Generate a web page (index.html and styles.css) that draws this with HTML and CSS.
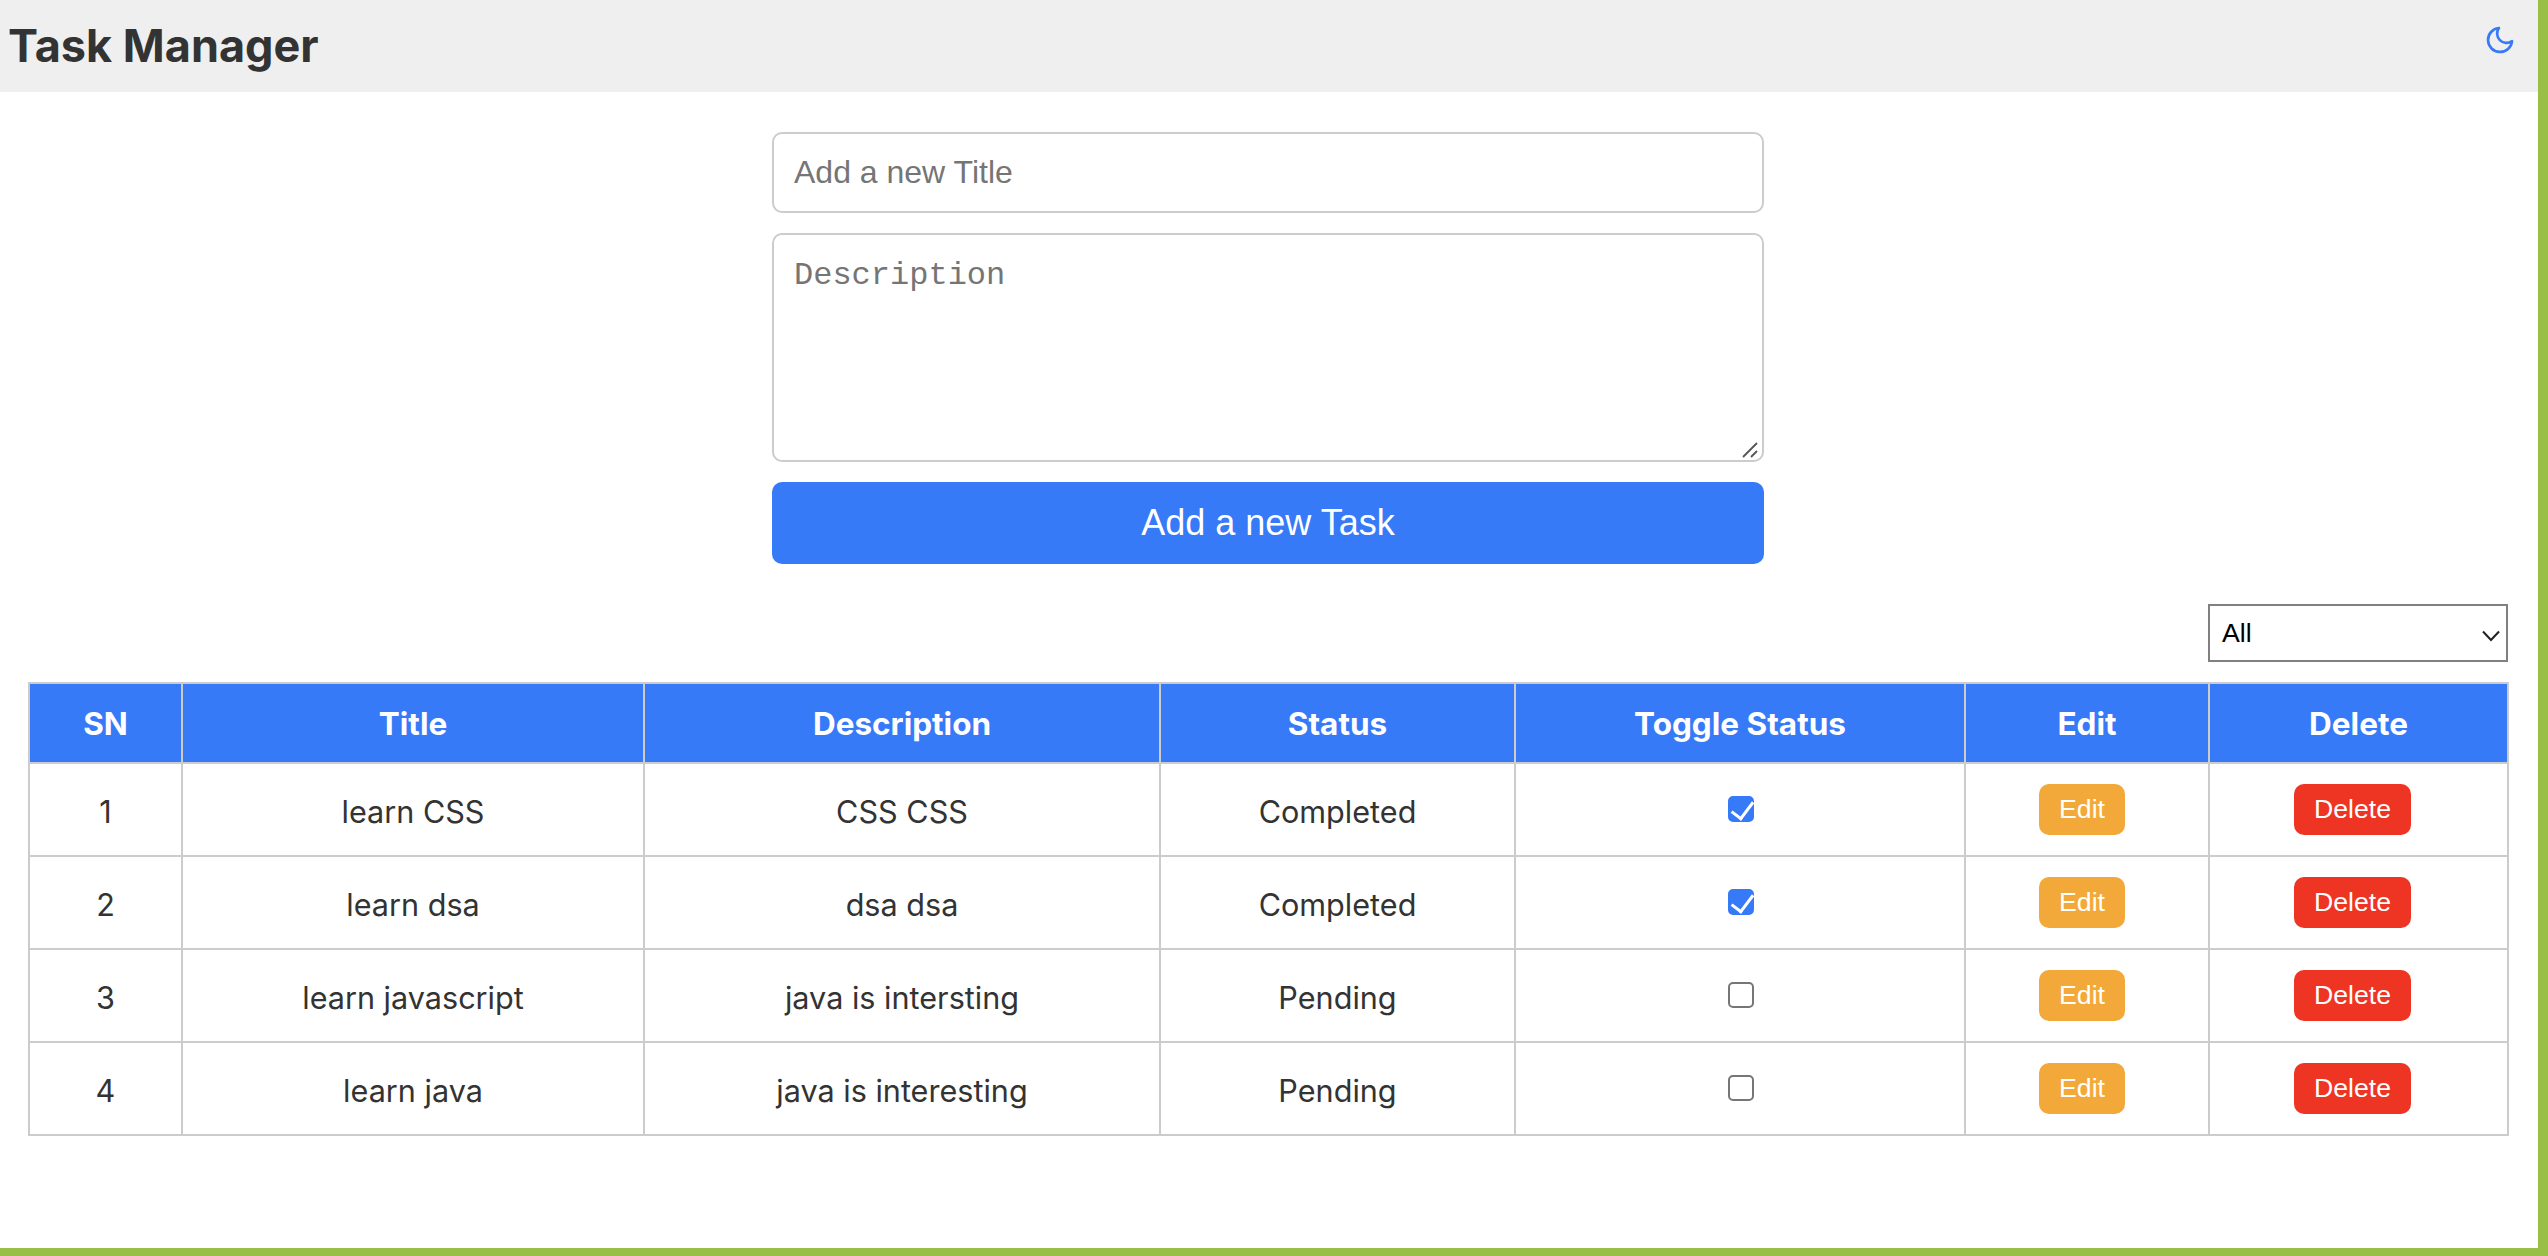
FILE: index.html
```html
<!DOCTYPE html>
<html lang="en">
<head>
<meta charset="utf-8">
<title>Task Manager</title>
<link rel="stylesheet" href="styles.css">
</head>
<body>
<div class="screen">
  <div class="app">
    <header class="topbar">
      <h1 class="brand">Task Manager</h1>
      <svg class="moon" width="32" height="32" viewBox="0 0 24 24" fill="none" stroke="#377af7" stroke-width="2" stroke-linecap="round" stroke-linejoin="round"><path d="M21 12.79A9 9 0 1 1 11.21 3 7 7 0 0 0 21 12.79z"/></svg>
    </header>
    <form class="task-form">
      <input class="field" type="text" placeholder="Add a new Title">
      <div class="area-wrap">
        <textarea class="field area" placeholder="Description"></textarea>
        <svg class="grip" width="20" height="20" viewBox="0 0 20 20" fill="none" stroke="#555" stroke-width="1.8"><path d="M2 18 16 4M10 18l6-6"/></svg>
      </div>
      <button class="submit" type="button">Add a new Task</button>
    </form>
    <div class="filter-row">
      <div class="filter-wrap">
        <select class="filter"><option>All</option></select>
        <svg class="chev" width="18" height="12" viewBox="0 0 18 12" fill="none" stroke="#222" stroke-width="2"><path d="M1 1.500 9 10l8-8.500"/></svg>
      </div>
    </div>
    <div class="table-wrap">
      <table class="tasks">
        <colgroup>
          <col class="c1"><col class="c2"><col class="c3"><col class="c4"><col class="c5"><col class="c6"><col class="c7">
        </colgroup>
        <thead>
          <tr><th>SN</th><th>Title</th><th>Description</th><th>Status</th><th>Toggle Status</th><th>Edit</th><th>Delete</th></tr>
        </thead>
        <tbody>
          <tr><td class="txt">1</td><td class="txt">learn CSS</td><td class="txt">CSS CSS</td><td class="txt">Completed</td><td><input class="check" type="checkbox" checked></td><td><button class="btn edit" type="button">Edit</button></td><td><button class="btn del" type="button">Delete</button></td></tr>
          <tr><td class="txt">2</td><td class="txt">learn dsa</td><td class="txt">dsa dsa</td><td class="txt">Completed</td><td><input class="check" type="checkbox" checked></td><td><button class="btn edit" type="button">Edit</button></td><td><button class="btn del" type="button">Delete</button></td></tr>
          <tr><td class="txt">3</td><td class="txt">learn javascript</td><td class="txt">java is intersting</td><td class="txt">Pending</td><td><input class="check" type="checkbox"></td><td><button class="btn edit" type="button">Edit</button></td><td><button class="btn del" type="button">Delete</button></td></tr>
          <tr><td class="txt">4</td><td class="txt">learn java</td><td class="txt">java is interesting</td><td class="txt">Pending</td><td><input class="check" type="checkbox"></td><td><button class="btn edit" type="button">Edit</button></td><td><button class="btn del" type="button">Delete</button></td></tr>
        </tbody>
      </table>
    </div>
  </div>
</div>
</body>
</html>
```
FILE: styles.css
```css
* { box-sizing: border-box; }
html, body { margin: 0; padding: 0; height: 100%; }
body { background: #fff; font-family: Inter, "Liberation Sans", sans-serif; color: #333; overflow: hidden; }
.screen { height: 1256px; width: 2548px; border-right: 10px solid #9abf47; border-bottom: 8px solid #9abf47; }
.topbar { height: 92px; background: #efefef; display: flex; align-items: center; justify-content: space-between; padding: 0 22px 0 8px; }
.brand { margin: 0 0 2px; font-size: 45px; font-weight: 700; color: #333; font-family: Inter, sans-serif; }
.moon { display: block; align-self: flex-start; margin-top: 24px; }
.task-form { width: 992px; margin: 40px 0 0 772px; display: flex; flex-direction: column; }
.field { display: block; width: 100%; height: 81px; border: 2px solid #ccc; border-radius: 10px; padding: 0 20px; font-size: 32px; font-family: "Liberation Sans", sans-serif; background: #fff; }
.field::placeholder { color: #757575; }
.area-wrap { position: relative; margin: 20px 0; }
.area { height: 229px; padding: 22px 20px; font-family: "Liberation Mono", monospace; font-size: 32px; resize: none; }
.grip { position: absolute; right: 3px; bottom: 3px; }
.submit { height: 82px; border: 0; border-radius: 10px; background: #377af7; color: #fff; font-size: 36px; font-family: "Liberation Sans", sans-serif; }
.filter-row { display: flex; justify-content: flex-end; padding: 40px 30px 20px 0; }
.filter-wrap { position: relative; height: 58px; }
.filter { display: block; appearance: none; width: 300px; height: 58px; font-size: 26.67px; font-family: "Liberation Sans", sans-serif; background: #fff; color: #000; border: 2px solid #808080; border-radius: 0; padding-left: 12px; }
.chev { position: absolute; right: 8px; top: 26px; }
.table-wrap { padding: 0 31px 0 28px; }
.tasks { width: 100%; border-collapse: collapse; table-layout: fixed; font-size: 30.6px; }
.c1 { width: 153px; } .c2 { width: 462px; } .c3 { width: 516px; } .c4 { width: 355px; } .c5 { width: 450px; } .c6 { width: 244px; } .c7 { width: 299px; }
.tasks th, .tasks td { border: 2px solid #ccc; text-align: center; padding: 0; }
.tasks th { background: #377af7; color: #fff; height: 80px; font-size: 31.5px; font-weight: 700; }
.tasks td { height: 93px; color: #333; }
.tasks .txt { padding-top: 3px; }
.check { appearance: none; position: relative; display: block; width: 26px; height: 26px; margin: 0 0 1px calc(50% - 12px); border: 2px solid #767676; border-radius: 5px; background: #fff; }
.check:checked { background: #377af7; border-color: #377af7; }
.check:checked::after { content: ""; position: absolute; left: 5.500px; top: -1px; width: 10px; height: 19px; border: solid #fff; border-width: 0 3.500px 3.500px 0; transform: rotate(37deg); }
.btn { border: 0; border-radius: 10px; color: #fff; font-size: 26.67px; height: 51px; padding: 0 20px; font-family: "Liberation Sans", sans-serif; vertical-align: middle; }
.edit { background: #f3a93a; margin-right: 10px; }
.del { background: #ee3423; margin-right: 12px; }
```
